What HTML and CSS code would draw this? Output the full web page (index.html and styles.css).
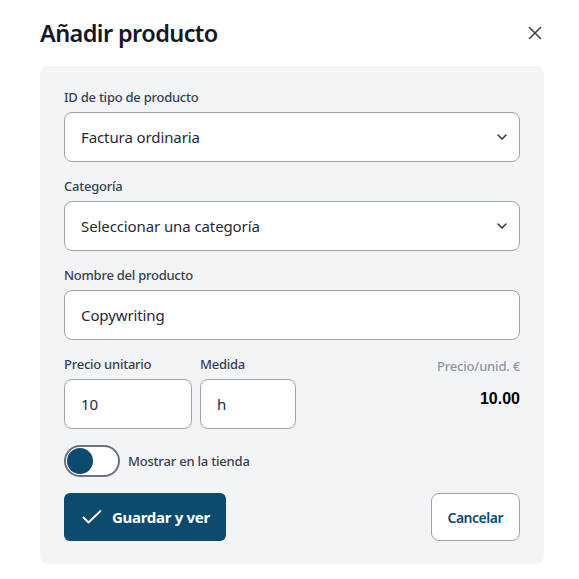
FILE: index.html
```html
<!DOCTYPE html>
<html lang="es">
<head>
<meta charset="utf-8">
<title>Añadir producto</title>
<link rel="stylesheet" href="styles.css">
</head>
<body>
<div class="modal">
  <header class="modal-header">
    <h1 class="modal-title">Añadir producto</h1>
    <button class="close-btn" aria-label="Cerrar">
      <svg width="14" height="14" viewBox="0 0 14 14"><path d="M1.5 1.5 L12.5 12.5 M12.5 1.5 L1.5 12.5" stroke="#374151" stroke-width="1.6" stroke-linecap="round" fill="none"/></svg>
    </button>
  </header>
  <div class="panel">
    <div class="field">
      <label class="label">ID de tipo de producto</label>
      <div class="control select">
        <span>Factura ordinaria</span>
        <svg class="chev" width="10" height="6" viewBox="0 0 10 6"><path d="M1 1 L5 5 L9 1" stroke="#1f2937" stroke-width="1.4" fill="none" stroke-linecap="round" stroke-linejoin="round"/></svg>
      </div>
    </div>
    <div class="field">
      <label class="label">Categoría</label>
      <div class="control select">
        <span>Seleccionar una categoría</span>
        <svg class="chev" width="10" height="6" viewBox="0 0 10 6"><path d="M1 1 L5 5 L9 1" stroke="#1f2937" stroke-width="1.4" fill="none" stroke-linecap="round" stroke-linejoin="round"/></svg>
      </div>
    </div>
    <div class="field">
      <label class="label">Nombre del producto</label>
      <div class="control"><span>Copywriting</span></div>
    </div>
    <div class="price-row">
      <div class="field price">
        <label class="label">Precio unitario</label>
        <div class="control"><span>10</span></div>
      </div>
      <div class="field unit">
        <label class="label">Medida</label>
        <div class="control"><span>h</span></div>
      </div>
      <div class="total">
        <div class="total-label">Precio/unid. €</div>
        <div class="total-value">10.00</div>
      </div>
    </div>
    <div class="toggle-row">
      <span class="toggle"><span class="knob"></span></span>
      <span class="toggle-label">Mostrar en la tienda</span>
    </div>
    <div class="actions">
      <button class="btn-primary">
        <svg width="20" height="14" viewBox="0 0 20 14"><path d="M1.5 7.5 L6.5 12.5 L18.5 1" stroke="#fff" stroke-width="1.8" fill="none" stroke-linecap="round" stroke-linejoin="round"/></svg>
        <span>Guardar y ver</span>
      </button>
      <button class="btn-secondary">Cancelar</button>
    </div>
  </div>
</div>
</body>
</html>
```
FILE: styles.css
```css
* { box-sizing: border-box; }
html, body { margin: 0; padding: 0; background: #fff; }
body {
  font-family: "Noto Sans", "Open Sans", sans-serif;
  color: #1f2937;
}
.modal {
  width: 579px;
  padding: 17px 35px 0 40px;
}
.modal-header {
  display: flex;
  align-items: center;
  justify-content: space-between;
  height: 32px;
  margin-bottom: 17px;
}
.modal-title {
  margin: 0;
  font-size: 23.5px;
  line-height: 32px;
  font-weight: 600;
  letter-spacing: -0.6px;
  color: #111827;
}
.close-btn {
  border: 0;
  background: none;
  padding: 0;
  width: 14px;
  height: 14px;
  margin-right: 2px;
  display: flex;
}
.panel {
  width: 504px;
  background: #f3f4f6;
  border-radius: 8px;
  padding: 21px 24px 23px 24px;
  display: flex;
  flex-direction: column;
  gap: 14px;
}
.field { display: flex; flex-direction: column; }
.label {
  font-size: 13px;
  line-height: 20px;
  font-weight: 500;
  letter-spacing: -0.25px;
  color: #374151;
  margin-bottom: 5px;
}
.control {
  height: 50px;
  background: #fff;
  border: 1px solid #9ca3af;
  border-radius: 8px;
  display: flex;
  align-items: center;
  justify-content: space-between;
  padding: 0 12px 0 16px;
  font-size: 15px;
  letter-spacing: -0.1px;
  color: #1f2937;
}
.price-row {
  display: flex;
  align-items: flex-start;
  gap: 8px;
}
.price { width: 128px; }
.unit { width: 96px; }
.total {
  margin-left: auto;
  text-align: right;
  padding-top: 2px;
}
.total-label {
  font-size: 13px;
  line-height: 20px;
  font-weight: 500;
  letter-spacing: -0.2px;
  color: #8e97a6;
}
.total-value {
  font-family: "Liberation Sans", Arial, sans-serif;
  font-weight: 700;
  font-size: 16px;
  line-height: 20px;
  color: #000;
  margin-top: 13px;
}
.toggle-row {
  display: flex;
  align-items: center;
  gap: 8px;
  margin-top: 2px;
}
.toggle {
  width: 56px;
  height: 32px;
  border: 2px solid #6b7280;
  border-radius: 16px;
  background: #fff;
  display: flex;
  align-items: center;
  padding: 0 1px;
}
.knob {
  width: 26px;
  height: 26px;
  border-radius: 50%;
  background: #0c4a6e;
}
.toggle-label {
  font-size: 13px;
  font-weight: 500;
  letter-spacing: -0.2px;
  color: #374151;
}
.actions {
  display: flex;
  justify-content: space-between;
  margin-top: 2px;
}
.btn-primary {
  height: 48px;
  display: flex;
  align-items: center;
  gap: 10px;
  padding: 0 16px 0 18px;
  background: #0c4a6e;
  color: #fff;
  border: 0;
  border-radius: 6px;
  font-family: inherit;
  font-size: 15px;
  font-weight: 700;
  letter-spacing: -0.3px;
}
.btn-secondary {
  height: 48px;
  padding: 0 16px;
  background: #fff;
  border: 1px solid #9ca3af;
  border-radius: 8px;
  color: #0c4a6e;
  font-family: inherit;
  font-size: 14px;
  font-weight: 600;
  letter-spacing: -0.5px;
}
```
